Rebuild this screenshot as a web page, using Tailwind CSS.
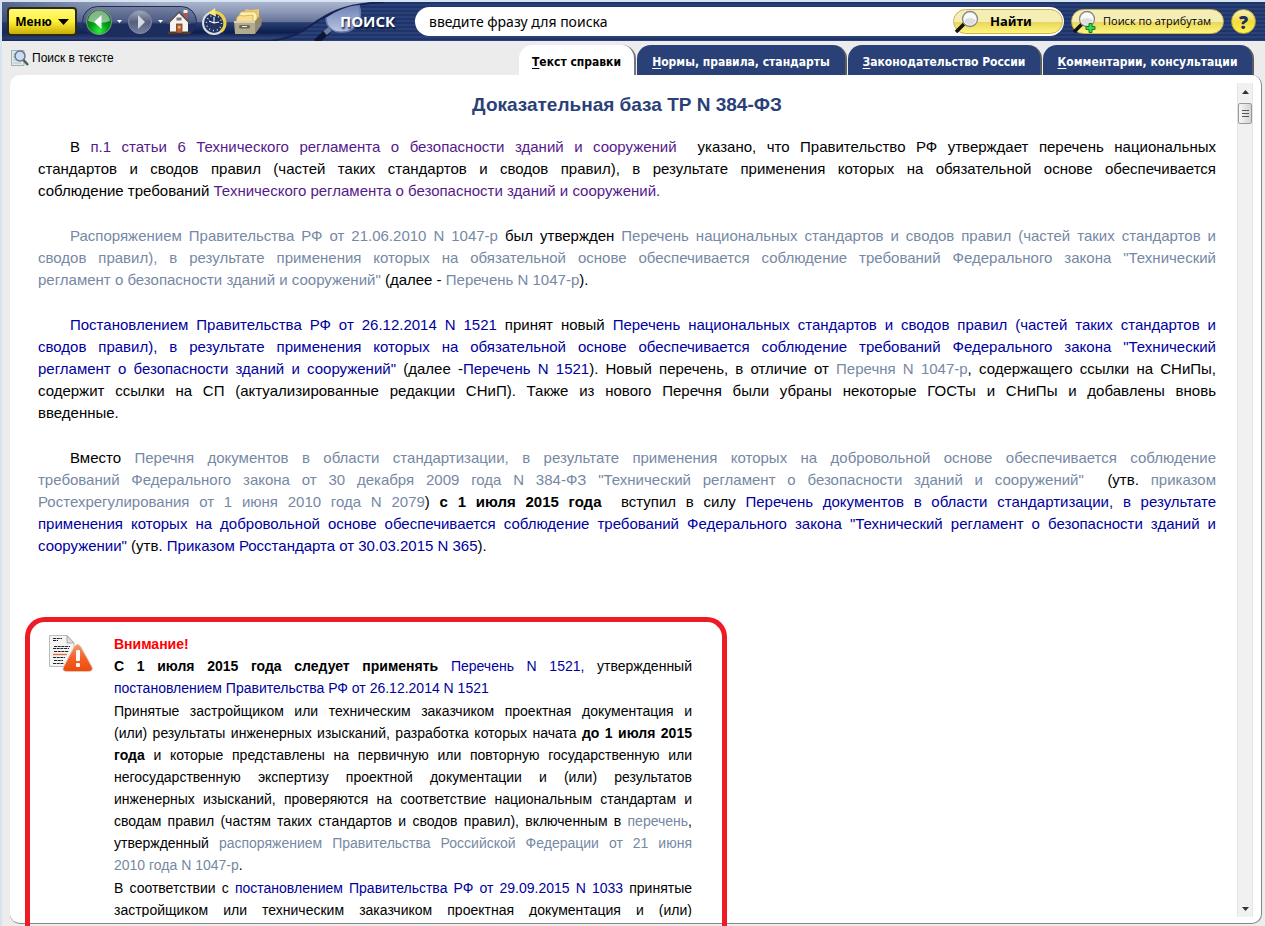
<!DOCTYPE html>
<html lang="ru">
<head>
<meta charset="utf-8">
<title>Доказательная база ТР N 384-ФЗ</title>
<script src="https://cdn.jsdelivr.net/npm/@tailwindcss/browser@4"></script>
</head>
<body class="flex h-screen flex-col overflow-hidden border-t-2 border-l-2 border-[#d6e4f1] bg-[#ececec] font-['Liberation_Sans',Arial,sans-serif] text-black">

<header class="relative flex h-[39px] shrink-0 items-center bg-[repeating-linear-gradient(#1f3469_0px,#1f3469_2px,#294178_2px,#294178_4px)] pr-[9px]">
  <!-- toolbar backdrop and magnifier -->
  <svg class="absolute top-0 left-0 h-[39px] w-[400px]" viewBox="0 0 400 39" aria-hidden="true">
    <defs>
      <linearGradient id="bar" x1="0" y1="0" x2="0" y2="1">
        <stop offset="0" stop-color="#aab4ce"/><stop offset=".25" stop-color="#8d98b5"/><stop offset=".5" stop-color="#66749a"/>
        <stop offset=".53" stop-color="#2c3f72"/><stop offset=".78" stop-color="#0c1e50"/><stop offset=".94" stop-color="#324679"/><stop offset="1" stop-color="#0d1d4b"/>
      </linearGradient>
      <linearGradient id="barfade" x1="0" y1="0" x2="1" y2="0">
        <stop offset="0" stop-color="#1d3163" stop-opacity=".6"/><stop offset=".4" stop-color="#1d3163" stop-opacity=".25"/><stop offset=".8" stop-color="#1d3163" stop-opacity="0"/>
      </linearGradient>
      <linearGradient id="lens" x1="0" y1="0" x2="0" y2="1"><stop offset="0" stop-color="#6f81b4"/><stop offset="1" stop-color="#b9c5e2"/></linearGradient>
    </defs>
    <path d="M0 0H382C340 2 325 12 308 24C298 32 284 37 268 39H0Z" fill="url(#bar)"/>
    <path d="M0 0H200V39H0Z" fill="url(#barfade)"/>
    <path d="M382 0C340 2 325 12 308 24C298 32 284 37 268 39" fill="none" stroke="#14234f" stroke-width="2"/>
    <path d="M324 16C335 8 346 4 357 3C362 18 353 30 341 30C331 31 324 25 324 16Z" fill="url(#lens)"/>
    <path d="M357 3C362 18 353 30 341 30C331 31 324 25 324 16" fill="none" stroke="#6579ae" stroke-width="1.500"/>
    <path d="M327 28L314 40" stroke="#0d1735" stroke-width="6"/>
    <path d="M328 27L323 31" stroke="#71809f" stroke-width="5"/>
  </svg>

  <nav class="relative ml-[5px] flex w-[327px] shrink-0 items-center">
    <button class="flex h-[29px] w-[70px] items-center justify-center gap-[6px] rounded border-2 border-[#2b2a18] bg-linear-to-b from-[#fffb78] via-[#fff034] to-[#c9ad00] font-['Noto_Sans',sans-serif] text-[12px] font-bold">Меню
      <svg class="h-[6px] w-[11px]" viewBox="0 0 11 6" aria-hidden="true"><path d="M0 0H11L5.500 6Z"/></svg>
    </button>
    <div class="ml-[5px] flex h-[31px] w-[115px] items-center rounded-full border border-[#202d57] bg-linear-to-b from-[#75809f] from-0% via-[#4c5b86] via-50% to-[#1c2d5e] to-60% pl-[3px]">
      <button aria-label="Назад"><svg class="h-[26px] w-[26px]" viewBox="0 0 26 26"><defs><radialGradient id="g" cx=".5" cy=".85" r=".8"><stop offset="0" stop-color="#2df23c"/><stop offset=".45" stop-color="#079c1b"/><stop offset="1" stop-color="#04570f"/></radialGradient></defs><circle cx="13" cy="13" r="12.500" fill="url(#g)" stroke="#93a59c" stroke-width=".8"/><path d="M2 12C3 4 9 1.500 13 1.500S23 4 24 12Q13 16 2 12Z" fill="#fff" opacity=".5"/><path d="M8 13L15.500 6V20Z" fill="#fff"/></svg></button>
      <svg class="ml-[5px] h-[3px] w-[5px]" viewBox="0 0 5 3" aria-hidden="true"><path d="M0 0H5L2.500 3Z" fill="#fff"/></svg>
      <button class="ml-[5px]" aria-label="Вперёд"><svg class="h-[26px] w-[26px]" viewBox="0 0 26 26"><defs><linearGradient id="f" x2="0" y2="1"><stop offset="0" stop-color="#a4abbd"/><stop offset=".5" stop-color="#565f7d"/><stop offset="1" stop-color="#76809a"/></linearGradient></defs><circle cx="13" cy="13" r="11.500" fill="url(#f)" stroke="#7f89a5"/><path d="M18 13L11 6V20Z" fill="#d6dae4"/></svg></button>
      <svg class="ml-[5px] h-[3px] w-[5px]" viewBox="0 0 5 3" aria-hidden="true"><path d="M0 0H5L2.500 3Z" fill="#fff"/></svg>
      <button class="ml-[4px]" aria-label="Домой"><svg class="h-[26px] w-[26px] -translate-x-px" viewBox="0 0 26 26"><path d="M18 2H21V11H18Z" fill="#c9512f"/><path d="M17.500 1H21.500V4H17.500Z" fill="#eee"/><path d="M4 13L13 4L22 13V23H4Z" fill="#f6f3f0"/><path d="M1.500 15L13 3L24.500 15" fill="none" stroke="#555" stroke-width="1.500"/><rect x="10.500" y="8.500" width="5" height="3" fill="#777"/><rect x="10.500" y="15" width="5.500" height="9" fill="#b5602f" stroke="#72401e" stroke-width=".8"/><rect x="12" y="17" width="2.500" height="2.500" fill="#e2b48f"/><path d="M2 22.500H10V25H2ZM16.500 22.500H24V25H16.500Z" fill="#5b3a22"/></svg></button>
    </div>
    <button class="ml-[4px]" aria-label="История"><svg class="h-[28px] w-[26px]" viewBox="0 0 26 28"><circle cx="13" cy="15" r="12" fill="#dcdde0"/><circle cx="13" cy="15" r="10" fill="#223461"/><path d="M12 4.500A10.800 10.800 0 0 1 20 23.500" fill="none" stroke="#ecd241" stroke-width="3.200"/><path d="M14 0L7 5L15 8.500Z" fill="#f9e977"/><circle cx="13" cy="15" r="7.500" fill="none" stroke="#dfe4f2" stroke-width="1.500" stroke-dasharray="1 2.930"/><path d="M13 15V9M13 15L18 14M13 15L8 13" fill="none" stroke="#fff" stroke-width="1.100"/></svg></button>
    <button class="ml-[6px]" aria-label="Картотека"><svg class="h-[26px] w-[30px]" viewBox="0 0 30 26"><path d="M8 3L12 2L13 0L17 1L26 0V9H6Z" fill="#e9c96c"/><path d="M6 6L8 3L22 3L24 6V12H4Z" fill="#fff0ad" stroke="#c3a04d" stroke-width=".5"/><path d="M4 8L7 6L10 7L20 6V13H3Z" fill="#f9dd8c" stroke="#bc9a44" stroke-width=".6"/><path d="M22 12L28.500 5V16L22 25Z" fill="#938b70"/><path d="M1 12H22V25H2Z" fill="#b3ab8e"/><path d="M1 12H22V14H1Z" fill="#d6d0b6"/><rect x="6" y="16" width="11" height="3.500" rx="1.500" fill="#6b664f"/><rect x="9" y="17" width="5" height="1" fill="#eee"/></svg></button>
  </nav>

  <form class="relative flex min-w-0 flex-1 items-center" onsubmit="return false">
    <label for="q" class="w-[81px] shrink-0 pl-[6px] font-['Open_Sans',sans-serif] text-[15px] font-bold text-white [text-shadow:1px_2px_2px_#0b1638]">ПОИСК</label>
    <div class="flex h-[29px] min-w-0 flex-1 items-center rounded-full bg-white pr-px">
      <input id="q" type="text" value="введите фразу для поиска" class="min-w-0 flex-1 bg-transparent pl-[14px] font-['Noto_Sans',sans-serif] text-[14px] outline-none">
      <button class="flex h-[25px] w-[110px] items-center rounded-full border border-[#c8b652] bg-linear-to-b from-[#f5eeb4] from-50% via-[#e8d75c] via-54% to-[#fff57c] font-['Noto_Sans',sans-serif] text-[13px] font-bold">
        <svg class="mr-[11px] h-[23px] w-[25px]" viewBox="0 0 25 23" aria-hidden="true"><path d="M10 14L2 22" stroke="#111" stroke-width="3.500"/><circle cx="16" cy="9" r="7.500" fill="#fafafa" stroke="#888" stroke-width="1.300"/><path d="M10 10Q16 6 22 10Q20 15 16 15T10 10" fill="#dedede"/></svg>Найти
      </button>
    </div>
  </form>
  <button class="relative ml-[7px] flex h-[25px] w-[153px] shrink-0 items-center rounded-full border border-[#c8b652] bg-linear-to-b from-[#f5eeb4] from-50% via-[#e8d75c] via-54% to-[#fff57c] font-['Open_Sans',sans-serif] text-[11px] font-medium whitespace-nowrap">
    <svg class="mr-[6px] h-[23px] w-[25px] shrink-0" viewBox="0 0 25 23" aria-hidden="true"><path d="M10 14L2 22" stroke="#111" stroke-width="3.500"/><circle cx="15" cy="9" r="7.500" fill="#fafafa" stroke="#888" stroke-width="1.300"/><path d="M9 10Q15 6 21 10Q19 15 15 15T9 10" fill="#dedede"/><path d="M17 13.500H20V16.500H23V19.500H20V22.500H17V19.500H14V16.500H17Z" fill="#35d64a" stroke="#1b7a2a"/></svg>Поиск по атрибутам
  </button>
  <button class="relative ml-[7px] h-[25px] w-[25px] shrink-0 rounded-full border border-[#b8a640] bg-linear-to-b from-[#f7f0b8] via-[#f0dc3c] to-[#fff24a] font-['Open_Sans',sans-serif] text-[18px]/[22px] font-extrabold text-[#1d2b66]" aria-label="Справка">?</button>
</header>

<div class="flex h-[34px] shrink-0 items-end justify-between pr-[11px] pl-[9px]">
  <button class="flex h-[34px] items-center gap-[3px] text-[12px]">
    <svg class="h-[18px] w-[18px]" viewBox="0 0 18 18" aria-hidden="true"><path d="M.5 1.500H13V16.500H.5Z" fill="#dfeaec" stroke="#9ab0b5"/><path d="M2 5H6M2 8H6M2 11H7M2 14H10" stroke="#a9c6cb"/><circle cx="9" cy="7" r="5" fill="#c9dcf4" stroke="#697786" stroke-width="1.500"/><path d="M12.500 11L17 16" stroke="#555" stroke-width="2.500"/></svg>
    Поиск в тексте
  </button>
  <nav class="flex h-[30px] gap-px font-['DejaVu_Sans_Condensed','DejaVu_Sans',sans-serif] text-[12px] font-bold whitespace-nowrap text-white">
    <a href="#" class="flex w-[117px] items-center justify-center rounded-t-[14px] border-r-2 border-[#777] bg-white pt-[3px] text-black"><span class="underline underline-offset-2">Т</span>екст справки</a>
    <a href="#" class="flex w-[210px] items-center justify-center rounded-t-[14px] border-r-2 border-[#5c5c5c] bg-[#2a4178] pt-[3px]"><span class="underline underline-offset-2">Н</span>ормы, правила, стандарты</a>
    <a href="#" class="flex w-[194px] items-center justify-center rounded-t-[14px] border-r-2 border-[#5c5c5c] bg-[#2a4178] pt-[3px]"><span class="underline underline-offset-2">З</span>аконодательство России</a>
    <a href="#" class="flex w-[211px] items-center justify-center rounded-t-[14px] border-r-2 border-[#5c5c5c] bg-[#2a4178] pt-[3px]"><span class="underline underline-offset-2">К</span>омментарии, консультации</a>
  </nav>
</div>

<main class="mr-[3px] mb-[2px] ml-[8px] flex min-h-0 flex-1 rounded-[10px] border-r border-b border-[#888] bg-white pt-[8px] pb-[6px]">
  <article class="relative min-w-0 flex-1 pr-[21px] pl-[28px] text-[15px]/[22px]">
    <div class="h-full overflow-hidden text-justify [text-align-last:justify]">
    <h1 class="pt-[10px] text-[19px]/[24px] font-bold text-[#2a4178] [text-align-last:center]">Доказательная база ТР N 384-ФЗ</h1>
    <div class="mt-[19px] flex flex-col gap-[23px]">
      <p class="indent-[32px]">В <a href="#" class="text-[#551a8b]">п.1 статьи 6 Технического регламента о безопасности зданий и сооружений</a>&nbsp; указано, что Правительство РФ утверждает перечень национальных<br>
        стандартов и сводов правил (частей таких стандартов и сводов правил), в результате применения которых на обязательной основе обеспечивается
        <span class="block indent-0 [text-align-last:left]">соблюдение требований <a href="#" class="text-[#551a8b]">Технического регламента о безопасности зданий и сооружений.</a></span></p>
      <p class="indent-[32px]"><a href="#" class="text-[#7688a4]">Распоряжением Правительства РФ от 21.06.2010 N 1047-р</a> был утвержден <a href="#" class="text-[#7688a4]">Перечень национальных стандартов и сводов правил (частей таких стандартов и<br>
        сводов правил), в результате применения которых на обязательной основе обеспечивается соблюдение требований Федерального закона "Технический</a>
        <span class="block indent-0 [text-align-last:left]"><a href="#" class="text-[#7688a4]">регламент о безопасности зданий и сооружений"</a> (далее - <a href="#" class="text-[#7688a4]">Перечень N 1047-р</a>).</span></p>
      <p class="indent-[32px]"><a href="#" class="text-[#0000a0]">Постановлением Правительства РФ от 26.12.2014 N 1521</a> принят новый <a href="#" class="text-[#0000a0]">Перечень национальных стандартов и сводов правил (частей таких стандартов и<br>
        сводов правил), в результате применения которых на обязательной основе обеспечивается соблюдение требований Федерального закона "Технический<br>
        регламент о безопасности зданий и сооружений"</a> (далее -<a href="#" class="text-[#0000a0]">Перечень N 1521</a>). Новый перечень, в отличие от <a href="#" class="text-[#7688a4]">Перечня N 1047-р</a>, содержащего ссылки на СНиПы,<br>
        содержит ссылки на СП (актуализированные редакции СНиП). Также из нового Перечня были убраны некоторые ГОСТы и СНиПы и добавлены вновь
        <span class="block indent-0 [text-align-last:left]">введенные.</span></p>
      <p class="indent-[32px]">Вместо <a href="#" class="text-[#7688a4]">Перечня документов в области стандартизации, в результате применения которых на добровольной основе обеспечивается соблюдение<br>
        требований Федерального закона от 30 декабря 2009 года N 384-ФЗ "Технический регламент о безопасности зданий и сооружений"</a>&nbsp; (утв. <a href="#" class="text-[#7688a4]">приказом<br>
        Ростехрегулирования от 1 июня 2010 года N 2079</a>) <b>с 1 июля 2015 года</b>&nbsp; вступил в силу <a href="#" class="text-[#0000a0]">Перечень документов в области стандартизации, в результате<br>
        применения которых на добровольной основе обеспечивается соблюдение требований Федерального закона "Технический регламент о безопасности зданий и</a>
        <span class="block indent-0 [text-align-last:left]"><a href="#" class="text-[#0000a0]">сооружении"</a> (утв. <a href="#" class="text-[#0000a0]">Приказом Росстандарта от 30.03.2015 N 365</a>).</span></p>
    </div>
    <section class="mt-[76px] flex gap-[21px] pl-[11px] text-[14px]/[22px]">
      <svg class="mt-[2px] h-[38px] w-[44px] shrink-0" viewBox="0 0 44 38" aria-hidden="true">
        <defs><linearGradient id="w" x2="0" y2="1"><stop offset="0" stop-color="#fa9a6c"/><stop offset=".5" stop-color="#f2622a"/><stop offset="1" stop-color="#f04a08"/></linearGradient></defs>
        <path d="M.5 .5H18L25 8V31.500H.5Z" fill="#f4f4f4" stroke="#bcbcbc"/><path d="M18 .5V8H25Z" fill="#ddd" stroke="#a8a8a8"/>
        <path d="M4 3.500H13M4 5.500H9M5 11.500H21M4 13.500H20M5 16.500H20M4 22.500H16M5 25.500H14M4 28.500H15" stroke="#222" stroke-width="1" stroke-dasharray="3 .7"/><path d="M4 19.500H18" stroke="#e06a3a" stroke-width="1.300"/>
        <path d="M25 12Q28.500 6.500 32 12L43 32Q44.500 36.500 39 36.500H18Q12.500 36.500 14.500 32Z" fill="url(#w)" stroke="#d9d0cc" stroke-width=".8"/>
        <rect x="27" y="15" width="4" height="11" rx="1" fill="#fff"/><rect x="27" y="28" width="4" height="4" rx="1" fill="#fff"/>
      </svg>
      <div class="w-[578px]">
        <p class="font-bold text-[#ff0000] [text-align-last:left]">Внимание!</p>
        <p><b>С 1 июля 2015 года следует применять</b> <a href="#" class="text-[#0000a0]">Перечень N 1521,</a> утвержденный
          <a href="#" class="block text-[#0000a0] [text-align-last:left]">постановлением Правительства РФ от 26.12.2014 N 1521</a></p>
        <p class="mt-px">Принятые застройщиком или техническим заказчиком проектная документация и<br>
          (или) результаты инженерных изысканий, разработка которых начата <b>до 1 июля 2015<br>
          года</b> и которые представлены на первичную или повторную государственную или<br>
          негосударственную экспертизу проектной документации и (или) результатов<br>
          инженерных изысканий, проверяются на соответствие национальным стандартам и<br>
          сводам правил (частям таких стандартов и сводов правил), включенным в <a href="#" class="text-[#7688a4]">перечень</a>,<br>
          утвержденный <a href="#" class="text-[#7688a4]">распоряжением Правительства Российской Федерации от 21 июня</a>
          <span class="block [text-align-last:left]"><a href="#" class="text-[#7688a4]">2010 года N 1047-р</a>.</span></p>
        <p class="mt-px">В соответствии с <a href="#" class="text-[#0000a0]">постановлением Правительства РФ от 29.09.2015 N 1033</a> принятые<br>
          застройщиком или техническим заказчиком проектная документация и (или)</p>
      </div>
    </section>
    </div>
    <!-- highlight frame drawn over the notice -->
    <div class="pointer-events-none absolute top-[534px] -bottom-[9px] left-[15px] w-[702px] rounded-t-[20px] border-[5px] border-b-0 border-[#ed1c24]"></div>
  </article>
  <div class="mr-[8px] flex w-[16px] shrink-0 flex-col items-center border-x border-[#e4e4e4] bg-[#f1f1f1]" aria-hidden="true">
    <svg class="mt-[7px] h-[4px] w-[7px]" viewBox="0 0 7 4"><path d="M0 4H7L3.500 0Z" fill="#333"/></svg>
    <div class="mt-[9px] flex h-[21px] w-[14px] flex-col items-center justify-center gap-[2px] rounded-xs border border-[#999] bg-linear-to-r from-[#f7f7f7] to-[#d2d2d2]">
      <div class="h-px w-[7px] bg-[#555]"></div><div class="h-px w-[7px] bg-[#555]"></div><div class="h-px w-[7px] bg-[#555]"></div>
    </div>
    <svg class="mt-auto mb-[6px] h-[4px] w-[7px]" viewBox="0 0 7 4"><path d="M0 0H7L3.500 4Z" fill="#333"/></svg>
  </div>
</main>
</body>
</html>
